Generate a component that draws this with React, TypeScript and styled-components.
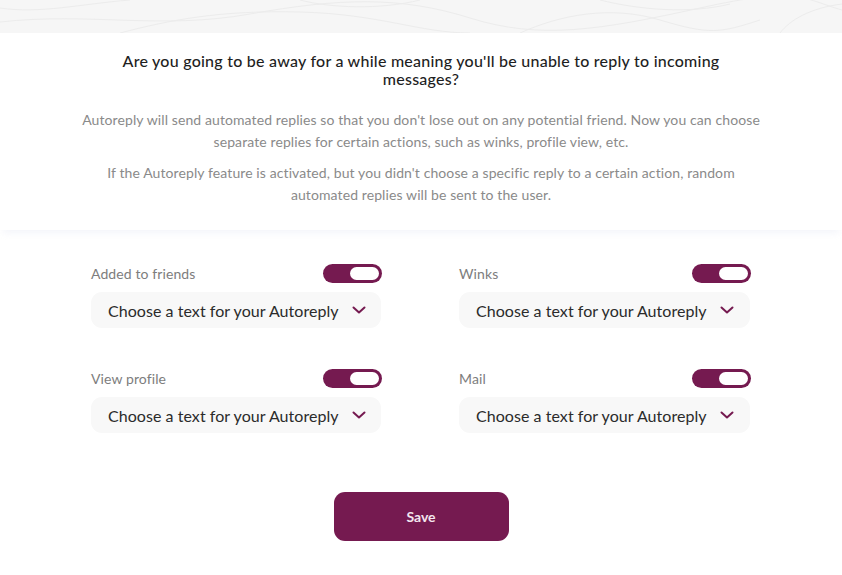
import React, { useState } from "react";
import styled, { createGlobalStyle } from "styled-components";

const Global = createGlobalStyle`
  html, body { margin: 0; padding: 0; background: #ffffff; }
  body { font-family: "Lato", "Open Sans", sans-serif; -webkit-font-smoothing: antialiased; }
  * { box-sizing: border-box; }
`;

const Page = styled.div`
  width: 842px;
  min-height: 575px;
  display: flex;
  flex-direction: column;
  background: #fff;
`;

const TopBand = styled.div`
  height: 33px;
  background: #f6f6f6;
  overflow: hidden;
  svg { display: block; }
`;

const Intro = styled.section`
  background: #fff;
  padding: 19px 60px 24px;
  display: flex;
  flex-direction: column;
  align-items: center;
  text-align: center;
  position: relative;
  box-shadow: 0 6px 7px -3px rgba(220, 222, 240, 0.3);
  z-index: 1;
`;

const Title = styled.h1`
  margin: 0;
  width: 620px;
  font-size: 16px;
  line-height: 18px;
  font-weight: 500;
  color: #1f1f1f;
  letter-spacing: 0.24px;
`;

const Lead = styled.p<{ $first?: boolean }>`
  margin: ${(p) => (p.$first ? "21px" : "9px")} 0 0;
  width: 690px;
  font-size: 14px;
  line-height: 22px;
  color: #8a8a8a;
  letter-spacing: 0.1px;
`;

const Form = styled.div`
  padding: 33px 91px 0;
  display: grid;
  grid-template-columns: 290px 291px;
  column-gap: 78px;
  row-gap: 40px;
`;

const Field = styled.div`
  display: flex;
  flex-direction: column;
  gap: 9px;
`;

const FieldHead = styled.div`
  display: flex;
  align-items: center;
  justify-content: space-between;
  height: 20px;
`;

const Label = styled.span`
  font-size: 14px;
  color: #7d7d7d;
  letter-spacing: 0.1px;
`;

const Toggle = styled.button<{ $on: boolean }>`
  width: 59px;
  height: 19px;
  margin-right: -1px;
  border: none;
  border-radius: 10px;
  padding: 3px;
  background: ${(p) => (p.$on ? "#751a50" : "#cfcfcf")};
  display: flex;
  justify-content: ${(p) => (p.$on ? "flex-end" : "flex-start")};
  cursor: pointer;
`;

const Knob = styled.span`
  width: 29px;
  height: 13px;
  border-radius: 7px;
  background: #fff;
`;

const Select = styled.div`
  height: 36px;
  border-radius: 11px;
  background: #f8f8f8;
  display: flex;
  align-items: center;
  padding: 0 0 0 17px;
  gap: 12px;
  font-size: 16px;
  color: #2b2b2b;
  letter-spacing: 0.05px;
  cursor: pointer;
`;

const Chevron = styled.svg`
  width: 16px;
  height: 10px;
  flex: none;
`;

const Actions = styled.div`
  display: flex;
  justify-content: center;
  padding-top: 59px;
`;

const SaveButton = styled.button`
  width: 175px;
  height: 49px;
  border: none;
  border-radius: 11px;
  background: #751a50;
  color: #f3e6ee;
  font-family: "Lato", sans-serif;
  font-weight: 700;
  font-size: 14px;
  cursor: pointer;
`;

const Contours = () => (
  <svg width="842" height="33" viewBox="0 0 842 33" fill="none">
    <g stroke="#ececec" strokeWidth="1">
      <path d="M0 22 C 90 12, 160 30, 250 14 S 400 -4, 470 18 S 600 30, 700 8 S 800 -2, 842 10" />
      <path d="M120 33 C 170 20, 220 10, 300 12 S 420 33, 470 33" />
      <path d="M520 33 C 560 15, 610 5, 660 20 S 720 33, 760 20" />
      <path d="M600 0 C 640 10, 690 14, 730 4" />
      <path d="M300 0 C 330 8, 380 10, 420 0" />
      <path d="M780 33 C 790 20, 810 8, 842 4" />
      <path d="M0 8 C 40 14, 80 4, 130 0" />
    </g>
  </svg>
);

type Item = { label: string };
const items: Item[] = [
  { label: "Added to friends" },
  { label: "Winks" },
  { label: "View profile" },
  { label: "Mail" },
];

const FieldBlock = ({ label }: Item) => {
  const [on, setOn] = useState(true);
  return (
    <Field>
      <FieldHead>
        <Label>{label}</Label>
        <Toggle $on={on} onClick={() => setOn(!on)} aria-label={label}>
          <Knob />
        </Toggle>
      </FieldHead>
      <Select>
        Choose a text for your Autoreply
        <Chevron viewBox="0 0 16 10">
          <path d="M2.5 2.5 L8 7.5 L13.5 2.5" stroke="#751a50" strokeWidth="2" fill="none" strokeLinecap="round" strokeLinejoin="round" />
        </Chevron>
      </Select>
    </Field>
  );
};

export default function App() {
  return (
    <Page>
      <Global />
      <TopBand>
        <Contours />
      </TopBand>
      <Intro>
        <Title>Are you going to be away for a while meaning you'll be unable to reply to incoming messages?</Title>
        <Lead $first>
          Autoreply will send automated replies so that you don't lose out on any potential friend. Now you can choose separate replies for certain actions, such as winks, profile view, etc.
        </Lead>
        <Lead>
          If the Autoreply feature is activated, but you didn't choose a specific reply to a certain action, random automated replies will be sent to the user.
        </Lead>
      </Intro>
      <Form>
        {items.map((it) => (
          <FieldBlock key={it.label} label={it.label} />
        ))}
      </Form>
      <Actions>
        <SaveButton>Save</SaveButton>
      </Actions>
    </Page>
  );
}
